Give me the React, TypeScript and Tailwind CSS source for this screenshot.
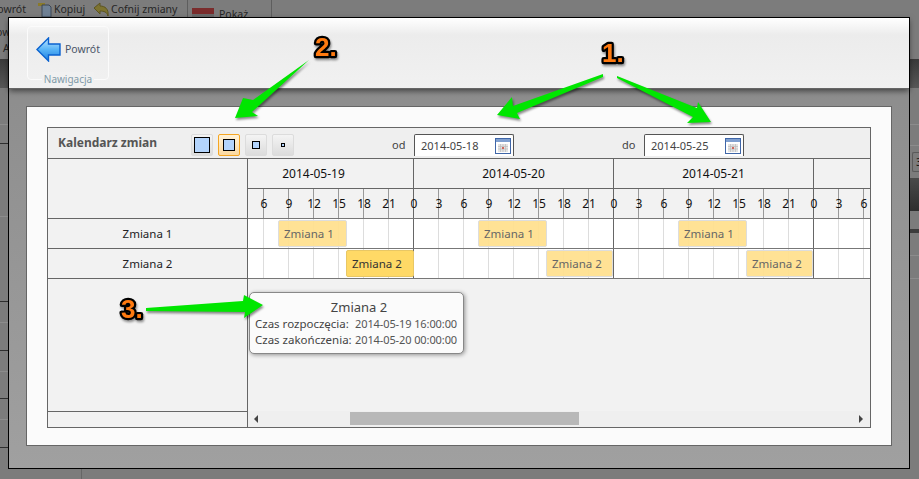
const FONT = { fontFamily: '"Noto Sans", "DejaVu Sans", sans-serif' };

const HOURS = [0, 3, 6, 9, 12, 15, 18, 21];
const DAYS = ["2014-05-19", "2014-05-20", "2014-05-21", "2014-05-22"];
const LEFT_ROWS: [number, boolean][] = [
  [37, false], [19, true], [73, false], [85, true], [21, false], [28, true], [21, false], [27, true], [21, false], [28, true],
];

function HourCells({ labels, line }: { labels: boolean; line: string }) {
  return (
    <>
      {DAYS.flatMap((d) =>
        HOURS.map((h, i) => {
          const next = i === 7 ? 0 : HOURS[i + 1];
          return (
            <div
              key={d + h}
              className={`flex h-full w-[25px] shrink-0 items-center justify-end border-r ${i === 7 ? "border-[#666]" : line}`}
            >
              {labels && <span className="translate-x-[calc(50%+1px)] text-[12px] text-[#111]">{next}</span>}
            </div>
          );
        })
      )}
    </>
  );
}

function Bar({ left, width, label, active }: { left: number; width: number; label: string; active?: boolean }) {
  return (
    <div
      className={`absolute top-[1px] flex h-[27px] items-center rounded-[2px] border pl-[5px] text-[11.500px] ${
        active ? "border-[#e8c765] bg-[#ffd966] text-[#333]" : "border-[#ddd] bg-[#ffe08f]/95 text-[#666]"
      }`}
      style={{ left, width }}
    >
      {label}
    </div>
  );
}

function SizeButton({ size, active }: { size: number; active?: boolean }) {
  return (
    <button
      className={`flex h-[22px] w-[22px] items-center justify-center rounded-[2px] border ${
        active
          ? "border-[#f5a623] bg-gradient-to-b from-[#fff2d8] to-[#fbd9a0]"
          : "border-[#dcdcdc] bg-gradient-to-b from-[#f4f4f4] to-[#dcdcdc]"
      }`}
    >
      <span className="block border-[1px] border-black bg-[#b3d4fc]" style={{ width: size, height: size }} />
    </button>
  );
}

function CalendarIcon() {
  return (
    <svg width="16" height="16" viewBox="0 0 16 16" className="shrink-0">
      <rect x="0.5" y="0.5" width="15" height="15" fill="#fff" stroke="#3f66a8" />
      <rect x="1" y="1" width="14" height="3" fill="#7f9fcf" />
      <rect x="3" y="6" width="10" height="8" fill="#e4e4e4" />
      <path d="M3 8.500h10M3 11h10M5.500 6v8M8 6v8M10.500 6v8" stroke="#bbb" strokeWidth="0.7" />
      <rect x="7" y="9" width="2" height="2" fill="#d0665a" />
    </svg>
  );
}

function DateInput({ value }: { value: string }) {
  return (
    <div className="flex h-[22px] w-[100px] items-center justify-between rounded-t-[2px] border border-b-0 border-[#555] bg-white pl-[6px] pr-[2px] text-[11px] text-[#444]">
      <span className="pt-[1px]">{value}</span>
      <CalendarIcon />
    </div>
  );
}

function BigArrow({ d }: { d: string }) {
  return <path d={d} fill="#00e600" style={{ filter: "drop-shadow(1px 2px 1px rgba(0,0,0,.45))" }} />;
}

function Num({ x, y, t }: { x: number; y: number; t: string }) {
  return (
    <text
      x={x}
      y={y}
      fontFamily='"Liberation Sans", sans-serif'
      fontWeight="700"
      fontSize="26"
      fill="#ff7a10"
      stroke="#000"
      strokeWidth="4.500"
      strokeLinejoin="round"
      paintOrder="stroke"
      style={{ filter: "drop-shadow(1px 2px 1px rgba(0,0,0,.4))" }}
    >
      {t}
    </text>
  );
}

export default function App() {
  return (
    <div className="relative h-[479px] w-[919px] overflow-hidden bg-[#7c7c7c]" style={FONT}>
      {/* dimmed page behind the dialog */}
      <div className="relative h-[59px] overflow-hidden bg-[#7c7c7c] text-[10.500px] text-[#262626]">
        <div className="flex h-[20px] items-center">
          <span className="-ml-[9px] w-[35px] shrink-0 whitespace-nowrap">Powrót</span>
          <svg width="16" height="16" viewBox="0 0 16 16" className="ml-[11px] shrink-0">
            <path d="M1 1h7v3H1z" fill="#8a7a2a" />
            <path d="M5 3h7l2 2v10H5z" fill="#6f8195" stroke="#3c4654" />
          </svg>
          <span className="ml-[1px] w-[29px] shrink-0">Kopiuj</span>
          <svg width="17" height="16" viewBox="0 0 17 16" className="ml-[10px] shrink-0">
            <path d="M1 6l6-5v3c5 0 9 3 8 10-1-4-4-5-8-5v3z" fill="#7d7330" stroke="#5c5420" />
          </svg>
          <span className="ml-[1px] w-[64px] shrink-0 whitespace-nowrap">Cofnij zmiany</span>
          <div className="ml-[12px] flex h-[20px] w-[85px] shrink-0 gap-[5px] border-x border-[#5e5e5e] pl-[4px]">
            <svg width="22" height="14" viewBox="0 0 22 14" className="mt-[8px] shrink-0">
              <rect width="22" height="14" fill="#7a2c2c" />
              <rect y="6" width="22" height="8" fill="#6a6a6a" />
            </svg>
            <span className="mt-[7px] whitespace-nowrap">Pokaż</span>
          </div>
        </div>
        <div className="-ml-[4px] mt-[5px] leading-[14px]">
          <div>ow</div>
          <div className="ml-[7px] mt-[2px]">A</div>
        </div>
      </div>
      <div className="h-[29px] bg-gradient-to-b from-[#3a3a3a] to-[#585858]" />
      <div className="flex justify-between">
        <div className="w-[10px]">
          {LEFT_ROWS.map(([h, dark], i) => (
            <div key={i} className={`border-b ${dark ? "border-[#2e2e2e]" : "border-[#8c8c8c]"}`} style={{ height: h }} />
          ))}
        </div>
        <div className="w-[10px]">
          <div className="h-[37px] border-b border-[#8c8c8c]" />
          <div className="h-[21px] border-b border-[#8c8c8c]" />
          <div className="flex h-[32px] items-center pl-[3px]">
            <div className="h-[20px] w-[7px] shrink-0 overflow-hidden rounded-l-[2px] border border-r-0 border-[#5a5a5a] pl-[3px] text-[11px] leading-[18px] text-[#111]">3</div>
          </div>
          <div className="h-[33px] bg-gradient-to-b from-[#4a4a4a] to-[#2e2e2e]" />
          <div className="h-[18px]" />
          <div className="h-[4px] bg-[#3c3c3c]" />
          <div className="h-[23px] border-b border-[#8c8c8c]" />
          <div className="h-[23px] border-b border-[#8c8c8c]" />
        </div>
      </div>
      <div className="absolute bottom-0 left-[81px] h-[10px] w-px bg-[#666]" />

      {/* dialog */}
      <div className="absolute left-[8px] top-[17px] flex h-[452px] w-[902px] flex-col border border-black bg-gradient-to-b from-[#8a8a8a] to-[#a0a0a0]">
        <div className="relative h-[71px] shrink-0 border-b border-[#666] bg-[linear-gradient(#ffffff,#ececec_24%,#f1f1f1)] shadow-[0_2px_6px_rgba(0,0,0,0.55)]">
          <div className="absolute left-[18px] top-[8px] flex h-[54px] w-[82px] flex-col rounded-[4px] border border-[#fbfbfb]">
            <div className="flex flex-1 items-center pl-[8px]">
              <svg width="25" height="25" viewBox="0 0 25 25">
                <defs>
                  <linearGradient id="ba" x1="0" y1="0" x2="0" y2="1">
                    <stop offset="0" stopColor="#bfe6ff" />
                    <stop offset="0.5" stopColor="#58b4f7" />
                    <stop offset="1" stopColor="#1c7ee0" />
                  </linearGradient>
                </defs>
                <path d="M1 12.500L12.500 1v6h11.500v11H12.500v6z" fill="url(#ba)" stroke="#0a62d0" strokeWidth="1.4" />
              </svg>
              <span className="ml-[4px] text-[10.500px] text-[#4a5568]">Powrót</span>
            </div>
            <div className="-mb-[7px] self-center bg-[#f1f1f1] px-[2px] text-[10px] leading-[14px] text-[#7f9aa8]">Nawigacja</div>
          </div>
        </div>

        <div className="mx-[17px] mb-[22px] mt-[17px] flex flex-1 flex-col border border-[#666] bg-[#fbfbfb] px-[20px] pb-[17px] pt-[20px]">
          <div className="flex flex-1 flex-col border border-[#666] bg-[#f2f2f2]">
            {/* title row */}
            <div className="flex h-[31px] shrink-0 items-start border-b border-[#666] bg-[#efefef]">
              <span className="ml-[10px] mt-[7px] w-[133px] text-[12px] font-bold leading-[16px] text-[#555]">Kalendarz zmian</span>
              <div className="mt-[6px] flex gap-[5px]">
                <SizeButton size={16} />
                <SizeButton size={12} active />
                <SizeButton size={8} />
                <SizeButton size={4} />
              </div>
              <span className="ml-[98px] mt-[10px] w-[22px] text-[11px] leading-[14px] text-[#444]">od</span>
              <div className="mt-[6px]"><DateInput value="2014-05-18" /></div>
              <span className="ml-[108px] mt-[10px] w-[22px] text-[11px] leading-[14px] text-[#444]">do</span>
              <div className="mt-[6px]"><DateInput value="2014-05-25" /></div>
            </div>

            <div className="flex min-h-0 flex-1">
              {/* left column */}
              <div className="flex w-[200px] shrink-0 flex-col border-r border-[#666] text-[11.500px] text-[#222]">
                <div className="h-[60px] border-b border-[#666]" />
                <div className="flex h-[30px] items-center justify-center border-b border-[#666]">Zmiana 1</div>
                <div className="flex h-[30px] items-center justify-center border-b border-[#666]">Zmiana 2</div>
                <div className="flex-1 border-b border-[#666]" />
                <div className="h-[15px]" />
              </div>

              {/* timeline */}
              <div className="relative flex min-w-0 flex-1 flex-col overflow-hidden">
                <div className="flex h-[30px] shrink-0 border-b border-[#666]">
                  <div className="-ml-[34px] flex">
                    {DAYS.map((d) => (
                      <div key={d} className="flex w-[200px] shrink-0 items-center justify-center border-r border-[#666] text-[12px] text-[#111]">
                        {d}
                      </div>
                    ))}
                  </div>
                </div>
                <div className="flex h-[30px] shrink-0 border-b border-[#777]">
                  <div className="-ml-[34px] flex"><HourCells labels line="border-[#999]" /></div>
                </div>
                <div className="relative h-[30px] shrink-0 border-b border-[#777] bg-white">
                  <div className="-ml-[34px] flex h-full"><HourCells labels={false} line="border-[#ddd]" /></div>
                  <Bar left={30} width={69} label="Zmiana 1" />
                  <Bar left={230} width={69} label="Zmiana 1" />
                  <Bar left={430} width={69} label="Zmiana 1" />
                </div>
                <div className="relative h-[30px] shrink-0 border-b border-[#777] bg-white">
                  <div className="-ml-[34px] flex h-full"><HourCells labels={false} line="border-[#ddd]" /></div>
                  <Bar left={98} width={68} label="Zmiana 2" active />
                  <Bar left={298} width={67} label="Zmiana 2" />
                  <Bar left={498} width={67} label="Zmiana 2" />
                </div>
                <div className="flex-1" />
                <div className="flex h-[16px] shrink-0 items-center bg-[#efefef] pb-[1px] pl-[6px] pr-[7px]">
                  <span className="h-0 w-0 border-y-[4px] border-r-[4px] border-y-transparent border-r-[#444]" />
                  <span className="ml-[92px] h-[13px] w-[229px] bg-[#b8b8b8]" />
                  <span className="ml-auto h-0 w-0 border-y-[4px] border-l-[4px] border-y-transparent border-l-[#444]" />
                </div>

                {/* tooltip */}
                <div className="absolute left-[1px] top-[133px] h-[62px] w-[215px] rounded-[5px] border border-[#888] bg-[#fbfbfb] pl-[5px] text-[11.500px] leading-[16px] text-[#444] shadow-[1px_1px_4px_rgba(0,0,0,0.4)]">
                  <div className="pt-[6px] text-center text-[13px] leading-[16px]">Zmiana 2</div>
                  <div className="mt-[1px] flex whitespace-nowrap">
                    <span className="w-[100px] shrink-0">Czas rozpoczęcia:</span>
                    <span className="text-[11px] tracking-[-0.1px] text-[#555]">2014-05-19 16:00:00</span>
                  </div>
                  <div className="flex whitespace-nowrap">
                    <span className="w-[100px] shrink-0">Czas zakończenia:</span>
                    <span className="text-[11px] tracking-[-0.1px] text-[#555]">2014-05-20 00:00:00</span>
                  </div>
                </div>
              </div>
            </div>
          </div>
        </div>
      </div>

      {/* annotations */}
      <svg className="pointer-events-none absolute left-0 top-0" width="919" height="479" viewBox="0 0 919 479">
        <BigArrow d="M309 60L252 112 258 116 235 118 243 98 253 100Z" />
        <BigArrow d="M603 74L513 106 512 97 497 115 520 119 517 113 603 77Z" />
        <BigArrow d="M617 76L697 108 698 102 711 122 687 123 693 117 617 78Z" />
        <BigArrow d="M146 308L243 301 244 295 263 305 244 318 245 312 146 311Z" />
        <Num x={315} y={56} t="2." />
        <Num x={602} y={62} t="1." />
        <Num x={121} y={318} t="3." />
      </svg>
    </div>
  );
}
